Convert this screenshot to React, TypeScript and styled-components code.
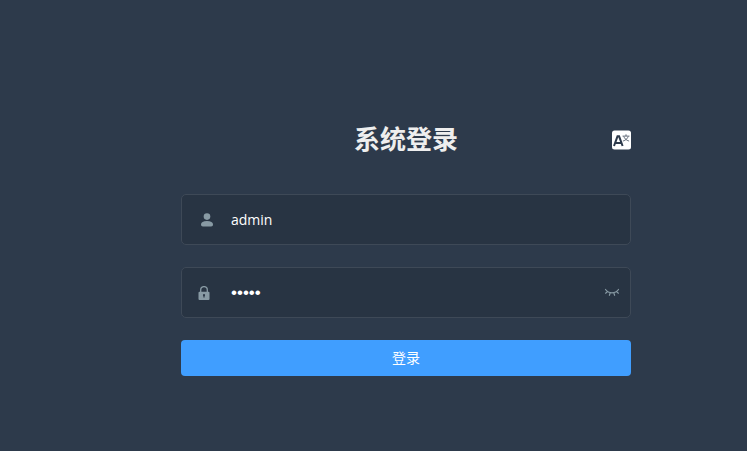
import React, { useState } from "react";
import styled, { createGlobalStyle } from "styled-components";

const GlobalStyle = createGlobalStyle`
  * {
    box-sizing: border-box;
  }

  body {
    margin: 0;
    background: #2d3a4b;
    font-family: "Open Sans", "Noto Sans CJK SC", sans-serif;
  }
`;

const Page = styled.main`
  min-height: 100vh;
  padding: 120px 0 40px 65px;
  background: #2d3a4b;
  overflow: hidden;
`;

const LoginForm = styled.form`
  display: flex;
  flex-direction: column;
  gap: 22px;
  width: 100%;
  max-width: 450px;
  margin: 0 auto;
`;

const Header = styled.header`
  display: grid;
  grid-template-columns: 1fr auto 1fr;
  align-items: center;
  height: 40px;
  margin-bottom: 12px;
`;

const Title = styled.h1`
  grid-column: 2;
  margin: 0;
  padding-bottom: 2px;
  color: #eee;
  font-size: 26px;
  line-height: 38px;
  font-weight: 700;
`;

const IconButton = styled.button`
  display: flex;
  justify-self: end;
  padding: 0;
  border: 0;
  background: none;
  color: #889aa4;
  cursor: pointer;
`;

const Field = styled.div`
  display: flex;
  align-items: center;
  height: 51px;
  padding-right: 10px;
  border: 1px solid #3e4957;
  border-radius: 5px;
  background: #283443;
`;

const FieldIcon = styled.label<{ $inset: number }>`
  display: flex;
  flex: none;
  width: 34px;
  padding-left: ${(p) => p.$inset}px;
  color: #889aa4;
`;

const TextInput = styled.input`
  flex: 1;
  min-width: 0;
  height: 47px;
  padding: 0 15px;
  border: 0;
  outline: 0;
  background: transparent;
  color: #fff;
  caret-color: #fff;
  font-family: inherit;
  font-size: 14px;

  &[type="password"] {
    font-family: "Liberation Sans", sans-serif;
    font-size: 17px;
  }
`;

const SubmitButton = styled.button`
  height: 36px;
  padding: 0 0 2px;
  border: 0;
  border-radius: 4px;
  background: #409eff;
  color: #fff;
  font-family: "Noto Sans CJK SC", sans-serif;
  font-size: 14px;
  line-height: 34px;
  cursor: pointer;
`;

const LanguageIcon = () => (
  <svg width="20" height="20" viewBox="0 0 20 20" aria-hidden="true">
    <rect x="1" y="0.5" width="19" height="19" rx="2.5" fill="#fff" />
    <path
      d="M3 16 6.500 6.300h1.600L11.600 16M4.600 13h5.400"
      fill="none"
      stroke="#2d3a4b"
      strokeWidth="2"
    />
    <path
      d="M11.500 6.100h7M15 4.300v1.800M12.800 6.400c.6 2 2.300 3.800 5.300 4.700M17.200 6.400c-.6 2-2.300 3.800-5.300 4.700"
      fill="none"
      stroke="#2d3a4b"
      strokeWidth="0.7"
    />
  </svg>
);

const UserIcon = () => (
  <svg width="14" height="14" viewBox="0 0 14 14" fill="currentColor" aria-hidden="true">
    <circle cx="7" cy="3.6" r="3.3" />
    <path d="M1 11.500C1 9.300 3.200 8 7 8s6 1.300 6 3.500c0 1.200-.7 2-1.900 2H2.900C1.700 13.500 1 12.700 1 11.500Z" />
  </svg>
);

const LockIcon = () => (
  <svg width="14" height="14" viewBox="0 0 14 14" aria-hidden="true">
    <path
      d="M3.700 6V3.900a3.300 3.300 0 0 1 6.600 0V6"
      fill="none"
      stroke="currentColor"
      strokeWidth="1.300"
    />
    <path
      fill="currentColor"
      fillRule="evenodd"
      d="M2.500 5.700h9a1 1 0 0 1 1 1V13a1 1 0 0 1-1 1h-9a1 1 0 0 1-1-1V6.700a1 1 0 0 1 1-1ZM7 8a1.100 1.100 0 0 0-.6 2V11.600h1.200V10A1.100 1.100 0 0 0 7 8Z"
    />
  </svg>
);

const ClosedEyeIcon = () => (
  <svg width="16" height="10" viewBox="0 0 16 10" fill="none" stroke="currentColor" aria-hidden="true">
    <path
      d="M1.500 1.500C4.500 5.900 11.500 5.900 14.500 1.500M3.400 3.600 1.600 5.200M6.200 4.900 5.400 7.300M9.800 4.900l.8 2.400M12.600 3.600l1.800 1.600"
      strokeWidth="1.200"
      strokeLinecap="round"
    />
  </svg>
);

export default function App() {
  const [username, setUsername] = useState("admin");
  const [password, setPassword] = useState("admin");
  const [visible, setVisible] = useState(false);

  return (
    <>
      <GlobalStyle />
      <Page>
        <LoginForm onSubmit={(e: React.FormEvent) => e.preventDefault()}>
          <Header>
            <Title>系统登录</Title>
            <IconButton type="button" aria-label="切换语言">
              <LanguageIcon />
            </IconButton>
          </Header>
          <Field>
            <FieldIcon htmlFor="username" $inset={18} aria-label="用户名">
              <UserIcon />
            </FieldIcon>
            <TextInput
              id="username"
              type="text"
              autoComplete="off"
              value={username}
              onChange={(e) => setUsername(e.target.value)}
            />
          </Field>
          <Field>
            <FieldIcon htmlFor="password" $inset={15} aria-label="密码">
              <LockIcon />
            </FieldIcon>
            <TextInput
              id="password"
              type={visible ? "text" : "password"}
              autoComplete="off"
              value={password}
              onChange={(e) => setPassword(e.target.value)}
            />
            <IconButton
              type="button"
              aria-label="显示密码"
              onClick={() => setVisible(!visible)}
            >
              <ClosedEyeIcon />
            </IconButton>
          </Field>
          <SubmitButton type="submit">登录</SubmitButton>
        </LoginForm>
      </Page>
    </>
  );
}
